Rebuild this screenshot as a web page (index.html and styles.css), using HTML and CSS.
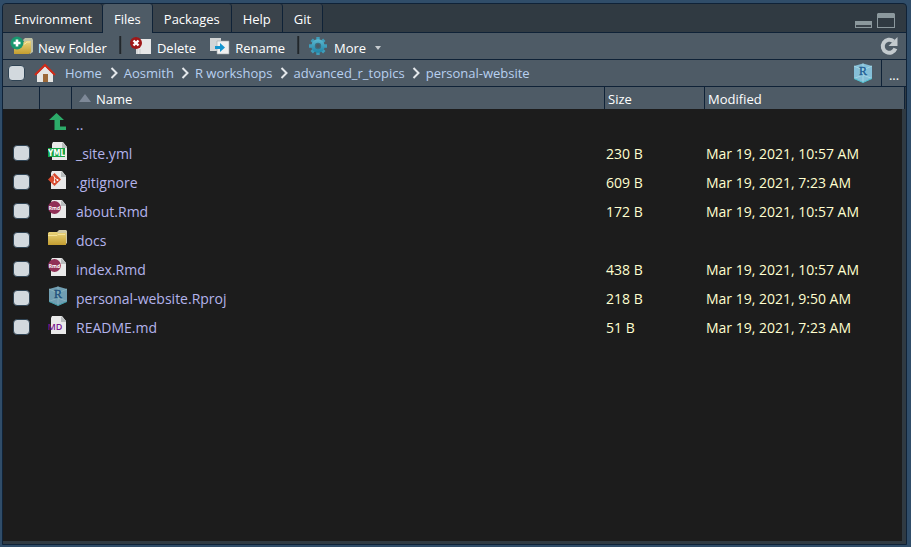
FILE: index.html
```html
<!DOCTYPE html>
<html lang="en">
<head>
<meta charset="utf-8">
<title>Files</title>
<link rel="stylesheet" href="styles.css">
</head>
<body>
<svg class="defs" aria-hidden="true">
  <defs>
    <linearGradient id="gold" x1="0" y1="0" x2="0" y2="1"><stop offset="0" stop-color="#e9d47c"/><stop offset="1" stop-color="#c39d30"/></linearGradient>
    <linearGradient id="teal" x1="0" y1="0" x2="0" y2="1"><stop offset="0" stop-color="#5cb8cf"/><stop offset="1" stop-color="#1f84a8"/></linearGradient>
  </defs>
  <symbol id="page" viewBox="0 0 20 20">
    <path d="M4 1h10l4 5v13H3V3z" fill="#e9e9e9"/><path d="M13 1l5 5v1h-5z" fill="#b9bcbd"/>
  </symbol>
  <symbol id="hex" viewBox="0 0 20 20">
    <path d="M10 .5 19 3v12.500L10 19.500 1 15.500V3z" fill="#85bfd8"/>
    <path d="M1 3l9 4 9-4M10 7v12.500M1 15.500 10 12l9 3.500M10 .5V7" fill="none" stroke="#a8dcea" stroke-width=".8"/>
    <path d="M1 15.500 10 19.500 19 15.500" fill="none" stroke="#4cc0cf"/>
  </symbol>
</svg>
<main class="pane">
  <nav class="tabs">
    <a href="#" class="tab">Environment</a>
    <a href="#" class="tab active">Files</a>
    <a href="#" class="tab">Packages</a>
    <a href="#" class="tab">Help</a>
    <a href="#" class="tab">Git</a>
    <div class="window-buttons">
      <button class="icon-button" aria-label="Minimize"><svg width="17" height="17" viewBox="0 0 17 17"><rect x=".5" y="9.500" width="16" height="6" fill="#3a434b" stroke="#8b989d"/><path d="M0 9h17v4H0z" fill="#8b989d"/></svg></button>
      <button class="icon-button" aria-label="Maximize"><svg width="18" height="17" viewBox="0 0 18 17"><rect x=".5" y="2.500" width="17" height="13" fill="#303a42" stroke="#8b989d"/><path d="M1 1h16l1 1v4H0V2z" fill="#8b989d"/></svg></button>
    </div>
  </nav>
  <div class="toolbar">
    <button class="tool"><svg width="24" height="20" viewBox="0 0 24 20"><path d="M13 4l2-2h7l1 2v12l-3 2z" fill="#bfc0a4"/><path d="M4 6h11l1-1h5v11l-2 2H4z" fill="url(#gold)"/><path d="M8 8h7l2-2h3" fill="none" stroke="#f3e6a4"/><circle cx="7" cy="7" r="6.500" fill="#19976f"/><path d="M7 3.500v7M3.500 7h7" stroke="#fff" stroke-width="2.600"/></svg><span>New Folder</span></button>
    <span class="divider"></span>
    <button class="tool"><svg width="23" height="20" viewBox="1 0 23 20"><path d="M7 3h15v15H7z" fill="#e7e7e7"/><path d="M8 12v6M11 13v5" stroke="#c7c9ca"/><circle cx="7" cy="7" r="6" fill="#9f1818"/><path d="M4.500 4.500l5 5M9.500 4.500l-5 5" stroke="#fff" stroke-width="2.400"/></svg><span>Delete</span></button>
    <button class="tool"><svg width="21" height="20" viewBox="1 0 21 20"><path d="M1 2h11v13H1z" fill="#d3d5d6"/><path d="M8 5h12v13H8z" fill="#f0f0f0" stroke="#9aa4aa" stroke-width=".6"/><path d="M6 10h5V7l5 4.500L11 16v-3H6z" fill="#1595cf"/></svg><span>Rename</span></button>
    <span class="divider"></span>
    <button class="tool more"><svg width="20" height="20" viewBox="0 0 20 20"><path d="M10 1v18.010M1 10h18.010M3.700 3.700l12.600 12.610M16.300 3.700 3.700 16.310" fill="none" stroke="#3f9dba" stroke-width="3.400"/><circle cx="10" cy="10" r="6.700" fill="url(#teal)"/><circle cx="10" cy="10" r="3.200" fill="#3b6f82"/><circle cx="10" cy="10" r="2" fill="#4b5c66"/></svg><span>More</span><i class="caret"></i></button>
    <button class="icon-button refresh" aria-label="Refresh"><svg width="20" height="20" viewBox="0 0 20 20"><path d="M14.500 5.300A6.500 6.500 0 1 0 16.400 12.500" fill="none" stroke="#c3cace" stroke-width="4"/><path d="M18.500 1v9h-9z" fill="#c3cace"/></svg></button>
  </div>
  <div class="path">
    <input type="checkbox" class="check" aria-label="Select all">
    <svg class="home" width="22" height="20" viewBox="0 0 22 20"><path d="M3 11l8-8 8 8v8H3z" fill="#e6e6e4"/><path d="M9 11h5v8H9z" fill="#9d6938"/><path d="M1 12 11 2l10 10" fill="none" stroke="#d02a18" stroke-width="2"/></svg>
    <a href="#">Home</a><svg class="chev" viewBox="0 0 9 12"><path d="M1.500 1l5 5-5 5"/></svg>
    <a href="#">Aosmith</a><svg class="chev" viewBox="0 0 9 12"><path d="M1.500 1l5 5-5 5"/></svg>
    <a href="#">R workshops</a><svg class="chev" viewBox="0 0 9 12"><path d="M1.500 1l5 5-5 5"/></svg>
    <a href="#">advanced_r_topics</a><svg class="chev" viewBox="0 0 9 12"><path d="M1.500 1l5 5-5 5"/></svg>
    <a href="#">personal-website</a>
    <button class="icon-button project" aria-label="Project directory"><svg width="20" height="20" viewBox="0 0 20 20"><use href="#hex" width="20" height="20"/><text x="10" y="12" class="glyph-r">R</text></svg></button>
    <button class="browse" aria-label="Browse">...</button>
  </div>
  <div class="listing">
  <table class="files">
    <colgroup><col class="c-check"><col class="c-icon"><col><col class="c-size"><col class="c-date"></colgroup>
    <thead><tr><th></th><th></th><th><i class="sort"></i>Name</th><th>Size</th><th>Modified</th></tr></thead>
    <tbody>
      <tr><td></td><td><svg class="kind" viewBox="0 0 20 20"><path d="M8.500 1 16 8h-4v6.500h6V18H6.500V8H1z" fill="#2cab69"/></svg></td><td><a href="#">..</a></td><td></td><td></td></tr>
      <tr><td><input type="checkbox" class="check" aria-label="_site.yml"></td><td><svg class="kind" viewBox="0 0 20 20"><use href="#page" x="1" width="20" height="20"/><path d="M0 7h17v9H0z" fill="#16a346"/><text x="8.500" y="14.500" class="glyph-yml">YML</text></svg></td><td><a href="#">_site.yml</a></td><td>230 B</td><td>Mar 19, 2021, 10:57 AM</td></tr>
      <tr><td><input type="checkbox" class="check" aria-label=".gitignore"></td><td><svg class="kind" viewBox="0 0 20 20"><use href="#page" width="20" height="20"/><path d="M6.500 3 13 9.500 6.500 16 0 9.500z" fill="#d84a2e"/><path d="M4.500 5l2 2v5M6.500 7.500l3 2.500" fill="none" stroke="#fff" stroke-width=".8"/><circle cx="6.500" cy="12" r="1" fill="#fff"/><circle cx="9.500" cy="10" r="1" fill="#fff"/></svg></td><td><a href="#">.gitignore</a></td><td>609 B</td><td>Mar 19, 2021, 7:23 AM</td></tr>
      <tr><td><input type="checkbox" class="check" aria-label="about.Rmd"></td><td><svg class="kind" viewBox="0 0 20 20"><use href="#page" width="20" height="20"/><circle cx="6.500" cy="8.500" r="6.400" fill="#913056"/><text x="6.500" y="10.500" class="glyph-rmd">Rmd</text></svg></td><td><a href="#">about.Rmd</a></td><td>172 B</td><td>Mar 19, 2021, 10:57 AM</td></tr>
      <tr><td><input type="checkbox" class="check" aria-label="docs"></td><td><svg class="kind" viewBox="0 0 20 20"><path d="M9 4l2-2h7l1 1v12l-2 2h-7z" fill="#cfc9a8"/><path d="M0 5l1-1h8l1 1h8v12H0z" fill="url(#gold)"/><path d="M0 7.500h9l1-1h7" fill="none" stroke="#f5e39a"/></svg></td><td><a href="#">docs</a></td><td></td><td></td></tr>
      <tr><td><input type="checkbox" class="check" aria-label="index.Rmd"></td><td><svg class="kind" viewBox="0 0 20 20"><use href="#page" width="20" height="20"/><circle cx="6.500" cy="8.500" r="6.400" fill="#913056"/><text x="6.500" y="10.500" class="glyph-rmd">Rmd</text></svg></td><td><a href="#">index.Rmd</a></td><td>438 B</td><td>Mar 19, 2021, 10:57 AM</td></tr>
      <tr><td><input type="checkbox" class="check" aria-label="personal-website.Rproj"></td><td><svg class="kind dim" viewBox="0 0 20 20"><use href="#hex" width="20" height="20"/><text x="10" y="12" class="glyph-r">R</text></svg></td><td><a href="#">personal-website.Rproj</a></td><td>218 B</td><td>Mar 19, 2021, 9:50 AM</td></tr>
      <tr><td><input type="checkbox" class="check" aria-label="README.md"></td><td><svg class="kind" viewBox="0 0 20 20"><use href="#page" width="20" height="20"/><text x="7" y="14.500" class="glyph-md">MD</text></svg></td><td><a href="#">README.md</a></td><td>51 B</td><td>Mar 19, 2021, 7:23 AM</td></tr>
    </tbody>
  </table>
  </div>
</main>
</body>
</html>
```
FILE: styles.css
```css
* { box-sizing: border-box; }
body {
  margin: 0;
  padding: 3px 4px 2px 2px;
  height: 100vh;
  display: flex;
  background: #304d69;
  color: #fff;
  font: 13px/18px "Open Sans", "Noto Sans", sans-serif;
}
.defs { position: absolute; width: 0; height: 0; }
a { color: inherit; text-decoration: none; }
button { border: 0; padding: 0; background: none; color: inherit; font: inherit; }
svg { display: block; flex: none; }

.pane {
  flex: 1;
  display: flex;
  flex-direction: column;
  min-width: 0;
  border: 1px solid #0f2237;
  border-radius: 4px 4px 0 0;
  background: #303a42;
  overflow: hidden;
}
.tabs { display: flex; height: 29px; border-bottom: 1px solid #0f2237; }
.tab {
  padding: 6px 10px 0 11px;
  background: #3a434b;
  border-right: 1px solid #0f2237;
  border-radius: 0 3px 0 0;
}
.tab + .tab { padding-right: 11px; }
.tab.active { background: #4e5b66; margin-bottom: -1px; border-radius: 3px 3px 0 0; }
.window-buttons { display: flex; gap: 5px; margin: 8px 11px 0 auto; align-items: flex-start; }

.toolbar, .path {
  display: flex;
  align-items: center;
  height: 27px;
  background: #4e5b66;
  border-bottom: 1px solid #0f2237;
}
.toolbar { padding: 0 7px; }
.tool { display: flex; align-items: center; gap: 4px; white-space: nowrap; }
.tool + .tool { margin-left: 14px; }
.tool svg { margin-top: -1px; }
.tool span { padding-top: 3px; }
.divider {
  width: 3px;
  height: 18px;
  margin: 0 8px 3px 12px;
  background: linear-gradient(90deg, #343d44, #1d2226 60%, #66727b);
}
.more { gap: 6px; }
.caret { border: 3px solid transparent; border-top: 4px solid #c7ccd0; border-bottom: 0; margin: 3px 0 0 3px; }
.refresh { margin-left: auto; }

.path { color: #b8d0f0; padding-left: 5px; }
.home { margin: 0 9px 0 9px; }
.chev { width: 9px; height: 12px; margin: 0 5px 0 8px; fill: none; stroke: #e4e8eb; stroke-width: 2; }
.path a { margin-right: -1px; }
.path a:first-of-type { margin-right: 0; }
.project { margin-left: auto; }
.browse { align-self: stretch; width: 25px; margin-left: 8px; border-left: 1px solid #0f2237; color: #fff; padding-top: 3px; }

.check {
  appearance: none;
  display: block;
  width: 17px;
  height: 16px;
  margin: 0;
  border: 1px solid #2f4353;
  border-radius: 4px;
  background: #d2d9de;
}

.listing {
  flex: 1;
  padding-right: 1px;
  background: linear-gradient(#1c1c1c, #1c1c1c) 0 0 / calc(100% - 4px) calc(100% - 3px) no-repeat #303a42;
}
.files { width: 100%; table-layout: fixed; border-spacing: 0; }
.c-check { width: 37px; }
.c-icon { width: 32px; }
.c-size { width: 100px; }
.c-date { width: 200px; }
.files th {
  height: 22px;
  padding: 2px 3px 0;
  background: #4e5b66;
  border-right: 1px solid #0f2237;
  font-weight: 400;
  text-align: left;
}
.files th:nth-child(3) { padding-left: 7px; }
.sort {
  display: inline-block;
  margin-right: 5px;
  border: 6px solid transparent;
  border-top: 0;
  border-bottom: 8px solid #7e8998;
  vertical-align: 2px;
}
.files td { height: 29px; padding: 2px 1px 0; font-size: 14px; line-height: 20px; color: #ffffd0; white-space: nowrap; }
.files td:first-child { padding: 1px 0 0 10px; }
.files td:nth-child(2) { padding: 0 0 3px 8px; }
.files td:nth-child(3) { padding-left: 4px; }
.files td a { color: #b3b3eb; }
.kind { width: 20px; height: 20px; }
.dim { opacity: .8; }

.glyph-rmd, .glyph-yml, .glyph-md, .glyph-r { text-anchor: middle; }
.glyph-rmd { font: 700 5px "Open Sans", sans-serif; fill: #fff; }
.glyph-yml { font: 700 8px "DejaVu Sans Condensed", "Liberation Sans Narrow", sans-serif; fill: #fff; }
.glyph-md { font: 600 9px "Open Sans", sans-serif; fill: #7a1590; }
.glyph-r { font: 400 12px "Liberation Serif", serif; fill: #1f5d94; stroke: #1f5d94; stroke-width: .3; }
```
